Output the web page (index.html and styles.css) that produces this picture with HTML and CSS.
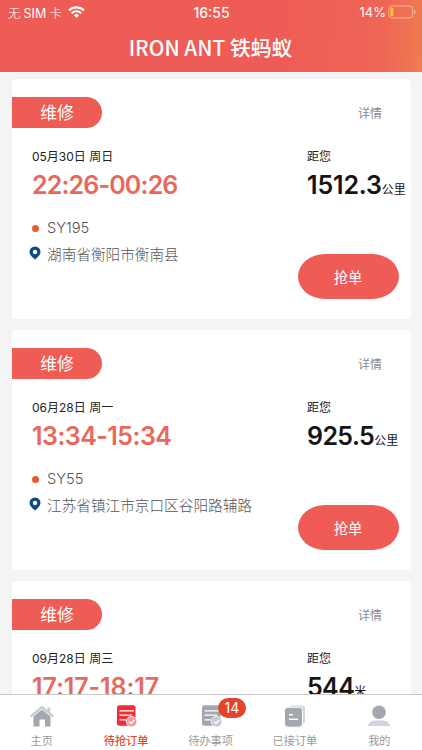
FILE: index.html
```html
<!DOCTYPE html>
<html lang="zh-CN">
<head>
  <meta charset="UTF-8">
  <meta name="viewport" content="width=device-width, initial-scale=1.0">
  <title>IRON ANT 铁蚂蚁</title>
  <link rel="stylesheet" href="styles.css">
</head>
<body>
  <header class="header">
    <div class="status">
      <div class="status-left">
        <span class="carrier">无<b>SIM</b>卡</span>
        <svg class="wifi" viewBox="0 0 17 12" width="17" height="12">
          <path d="M1 4.4a10.8 10.8 0 0 1 15 0" fill="none" stroke="#fff" stroke-width="2.1"/>
          <path d="M3.6 7.2a7 7 0 0 1 9.8 0" fill="none" stroke="#fff" stroke-width="2"/>
          <path d="M5.8 9.3a3.9 3.9 0 0 1 5.4 0L8.5 12z" fill="#fff"/>
        </svg>
      </div>
      <span class="clock">16:55</span>
      <div class="status-right">
        <span>14%</span>
        <svg viewBox="0 0 28 14" width="28" height="14">
          <rect x="0.8" y="0.9" width="23.8" height="12" rx="3.4" fill="none" stroke="#fff" stroke-opacity=".45"/>
          <rect x="2.4" y="2.6" width="3" height="8.6" rx="1.2" fill="#fdc62e"/>
          <path d="M26 4.8v4.2q1.5-.5 1.5-2.1T26 4.8z" fill="#fff" fill-opacity=".5"/>
        </svg>
      </div>
    </div>
    <h1 class="title">IRON ANT 铁蚂蚁</h1>
  </header>

  <main class="list">
    <section class="card">
      <div class="card-top">
        <span class="tag">维修</span>
        <a class="detail">详情</a>
      </div>
      <div class="card-info">
        <div class="when">
          <p class="label">05月30日 周日</p>
          <p class="time">22:26-00:26</p>
        </div>
        <div class="distance">
          <p class="label">距您</p>
          <p class="km">1512.3<small>公里</small></p>
        </div>
      </div>
      <div class="card-bottom">
        <div class="place">
          <p class="line"><i class="dot"></i>SY195</p>
          <p class="line"><svg class="pin" viewBox="0 0 12 14"><path d="M6 .5A5.5 5.5 0 0 0 .5 6C.5 9.2 3.6 11.2 6 13.5 8.4 11.2 11.5 9.2 11.5 6A5.5 5.5 0 0 0 6 .5zM6 3.800a2.200 2.200 0 1 1 0 4.400 2.200 2.200 0 0 1 0-4.400z" fill="#0e4b86" fill-rule="evenodd"/></svg>湖南省衡阳市衡南县</p>
        </div>
        <button class="grab">抢单</button>
      </div>
    </section>

    <section class="card">
      <div class="card-top">
        <span class="tag">维修</span>
        <a class="detail">详情</a>
      </div>
      <div class="card-info">
        <div class="when">
          <p class="label">06月28日 周一</p>
          <p class="time">13:34-15:34</p>
        </div>
        <div class="distance">
          <p class="label">距您</p>
          <p class="km">925.5<small>公里</small></p>
        </div>
      </div>
      <div class="card-bottom">
        <div class="place">
          <p class="line"><i class="dot"></i>SY55</p>
          <p class="line"><svg class="pin" viewBox="0 0 12 14"><path d="M6 .5A5.5 5.5 0 0 0 .5 6C.5 9.2 3.6 11.2 6 13.5 8.4 11.2 11.5 9.2 11.5 6A5.5 5.5 0 0 0 6 .5zM6 3.800a2.200 2.200 0 1 1 0 4.400 2.200 2.200 0 0 1 0-4.400z" fill="#0e4b86" fill-rule="evenodd"/></svg>江苏省镇江市京口区谷阳路辅路</p>
        </div>
        <button class="grab">抢单</button>
      </div>
    </section>

    <section class="card">
      <div class="card-top">
        <span class="tag">维修</span>
        <a class="detail">详情</a>
      </div>
      <div class="card-info">
        <div class="when">
          <p class="label">09月28日 周三</p>
          <p class="time">17:17-18:17</p>
        </div>
        <div class="distance">
          <p class="label">距您</p>
          <p class="km">544<small>米</small></p>
        </div>
      </div>
    </section>
  </main>

  <nav class="tabbar">
    <a class="tab">
      <svg viewBox="0 0 24 24" width="24" height="24">
        <path d="M3.5 12.5 12 5.500l8.500 7V22.500h-5.500v-7H9.500v7h-6z" fill="#a2a8ad"/>
        <path d="M.8 12.500 12 3l11.200 9.500" fill="none" stroke="#c9ccd2" stroke-width="2.400"/>
        <path d="M17.500 3.500h2.800v5l-2.800-2z" fill="#c9ccd2"/>
      </svg>
      <span>主页</span>
    </a>
    <a class="tab active">
      <svg viewBox="0 0 24 24" width="24" height="24">
        <rect x="3" y="1.300" width="18.500" height="20.400" rx="2.500" fill="#ee2f35"/>
        <path d="M5.500 6.800h14.500M5.500 11.100h12.500M5.500 15.800h6.500" stroke="#fff" stroke-width="1.300"/>
        <circle cx="17.600" cy="17.600" r="5.300" fill="#f59a9f" stroke="#fff" stroke-width=".8"/>
        <path d="m15 17.400 2 2.100 3.400-3.600" fill="none" stroke="#fff" stroke-width="1.400"/>
      </svg>
      <span>待抢订单</span>
    </a>
    <a class="tab">
      <svg viewBox="0 0 24 24" width="24" height="24">
        <rect x="3" y="1.300" width="18.500" height="20.400" rx="2.500" fill="#a2a8ae"/>
        <path d="M5.500 6.800h14.500M5.500 11.100h12.500M5.500 15.800h6.500" stroke="#fff" stroke-width="1.300"/>
        <circle cx="17.600" cy="17.600" r="5.300" fill="#c5cad2" stroke="#fff" stroke-width=".8"/>
        <path d="m15 17.400 2 2.100 3.400-3.600" fill="none" stroke="#fff" stroke-width="1.400"/>
      </svg>
      <em class="badge">14</em>
      <span>待办事项</span>
    </a>
    <a class="tab">
      <svg viewBox="0 0 24 24" width="24" height="24">
        <rect x="6" y="1.500" width="16" height="18.500" rx="3" fill="#d2d5dc"/>
        <rect x="1.500" y="3.200" width="18" height="20" rx="3.500" fill="#a2a8ae" stroke="#fff"/>
        <path d="M6 10.800h4M6 15.300h9" stroke="#fff" stroke-width="1.600"/>
      </svg>
      <span>已接订单</span>
    </a>
    <a class="tab">
      <svg viewBox="0 0 24 24" width="24" height="24">
        <path d="M1 22c.5-3.800 4-5.500 8-5.500h6c4 0 7.500 1.700 8 5.500z" fill="#d2d4dd"/>
        <circle cx="12" cy="8.300" r="7" fill="#a2a8ae" stroke="#fff" stroke-width=".5"/>
      </svg>
      <span>我的</span>
    </a>
  </nav>
</body>
</html>
```
FILE: styles.css
```css
* {
  box-sizing: border-box;
}
body {
  margin: 0;
  height: 750px;
  overflow: hidden;
  display: flex;
  flex-direction: column;
  background-color: #f4f4f4;
  font-family: Inter, "Noto Sans CJK SC", sans-serif;
  color: #222;
}
p {
  margin: 0;
}
.header {
  height: 72px;
  flex: none;
  color: #fff;
  background: linear-gradient(93deg, #ef5b55 65%, #ee6556 90%, #ef7c50 100%);
}
.status {
  display: grid;
  grid-template-columns: 1fr auto 1fr;
  align-items: center;
  height: 24px;
  padding: 0 6px 0 8px;
  font-size: 13px;
}
.status-left, .status-right {
  display: flex;
  align-items: center;
}
.status-left {
  gap: 6px;
}
.status-right {
  justify-content: flex-end;
  gap: 2px;
}
.carrier {
  font-size: 12.5px;
  font-weight: 300;
}
.carrier b {
  font-weight: 400;
  margin: 0 3px;
}
.clock {
  padding-right: 1px;
  font-size: 14px;
  font-weight: 500;
}
.title {
  margin: 0;
  font-family: "Noto Sans CJK SC", sans-serif;
  font-size: 20.8px;
  font-weight: 500;
  line-height: 47px;
  text-align: center;
  text-indent: -1px;
}
.list {
  flex: 1;
  min-height: 0;
  overflow: hidden;
  padding: 7px 11px 0 12px;
}
.card {
  height: 240px;
  margin-bottom: 11px;
  background-color: #fff;
  border-radius: 4px;
}
.card-top {
  display: flex;
  align-items: center;
  justify-content: space-between;
  padding: 18px 29px 0 0;
}
.tag {
  width: 90px;
  height: 31px;
  line-height: 32px;
  text-align: center;
  font-size: 16.8px;
  color: #fff;
  background-color: #ef5b55;
  border-radius: 0 16px 16px 0;
}
.detail {
  font-size: 12px;
  color: #858992;
}
.card-info {
  display: grid;
  grid-template-columns: 275px 1fr;
  padding: 20px 0 0 20px;
}
.label {
  font-size: 12px;
  line-height: 18px;
}
.time, .km {
  font-size: 25px;
  font-weight: 600;
  line-height: 34px;
  margin-top: 2px;
  white-space: nowrap;
}
.time {
  color: #e8695b;
  letter-spacing: -0.85px;
}
.card:nth-child(2) .time {
  letter-spacing: -0.55px;
}
.card:nth-child(3) .time {
  letter-spacing: -0.1px;
}
.km {
  color: #151515;
  letter-spacing: -0.15px;
}
.card:nth-child(n+2) .km {
  letter-spacing: -0.6px;
}
.km small {
  font-size: 12px;
  font-weight: 400;
  letter-spacing: 0;
}
.card-bottom {
  display: flex;
  justify-content: space-between;
  padding: 15px 12px 0 17px;
}
.place {
  margin-top: -5px;
}
.line {
  display: flex;
  align-items: center;
  height: 22px;
  margin-bottom: 4px;
  font-size: 14.65px;
  font-weight: 300;
  color: #555;
}
.line + .line {
  margin-top: -1px;
}
.dot {
  width: 7px;
  height: 7px;
  margin: 0 8px 0 3px;
  border-radius: 50%;
  background-color: #e85c2c;
}
.pin {
  width: 12px;
  height: 14px;
  margin-right: 6px;
}
.grab {
  width: 101px;
  height: 45px;
  margin-top: 32px;
  padding: 0 1px 1px 0;
  border: none;
  border-radius: 27px / 22.5px;
  background-color: #ef5b55;
  color: #fff;
  font-family: inherit;
  font-size: 14.3px;
}
.tabbar {
  display: flex;
  flex: none;
  height: 56px;
  border-top: 1px solid #c8c8c8;
  background-color: #fff;
}
.tab {
  position: relative;
  flex: 1;
  display: flex;
  flex-direction: column;
  align-items: center;
  padding-top: 9px;
  padding-right: 1px;
  font-size: 11.2px;
  line-height: 16px;
  color: #999;
}
.tab span {
  margin-top: 5px;
}
.tab.active {
  color: #e64a32;
  font-weight: 500;
}
/* unread count over the icon */
.badge {
  position: absolute;
  top: 3px;
  left: 49px;
  width: 28px;
  height: 20px;
  border-radius: 10px;
  background-color: #e3442b;
  color: #fff;
  font-size: 14px;
  font-style: normal;
  font-weight: 400;
  line-height: 20px;
  text-align: center;
}
```
